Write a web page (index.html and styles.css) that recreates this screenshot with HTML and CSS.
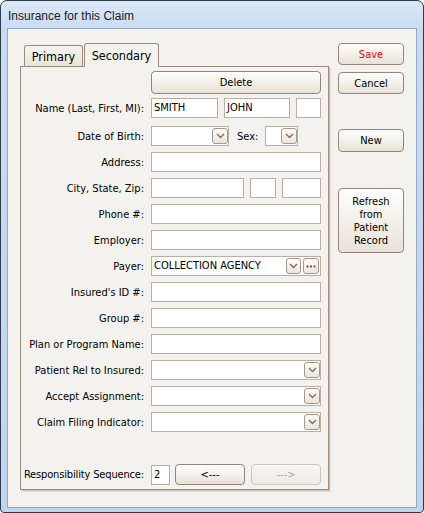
FILE: index.html
```html
<!DOCTYPE html>
<html>
<head>
<meta charset="utf-8">
<link rel="stylesheet" href="styles.css">
</head>
<body>
<div class="window">
  <div class="titlebar">Insurance for this Claim</div>
  <div class="client">
    <div class="main">
      <div class="tabs">
        <div class="tab primary">Primary</div>
        <div class="tab active">Secondary</div>
      </div>
      <div class="panel">
        <div class="row row-delete">
          <div class="lbl"></div>
          <div class="btn delete">Delete</div>
        </div>
        <div class="row row-name">
          <div class="lbl">Name (Last, First, MI):</div>
          <div class="fld">
            <div class="box w-last">SMITH</div>
            <div class="box w-first">JOHN</div>
            <div class="box w-mi"></div>
          </div>
        </div>
        <div class="row row-dob">
          <div class="lbl">Date of Birth:</div>
          <div class="fld">
            <div class="box select w-dob"><span class="val"></span><span class="dd"><svg width="9" height="6" viewBox="0 0 9 6"><path d="M1 1 L4.5 4.5 L8 1" fill="none" stroke="#7c6b5c" stroke-width="1.3"/></svg></span></div>
            <div class="sexlbl">Sex:</div>
            <div class="box select w-sex"><span class="val"></span><span class="dd"><svg width="9" height="6" viewBox="0 0 9 6"><path d="M1 1 L4.5 4.5 L8 1" fill="none" stroke="#7c6b5c" stroke-width="1.3"/></svg></span></div>
          </div>
        </div>
        <div class="row">
          <div class="lbl">Address:</div>
          <div class="fld"><div class="box full"></div></div>
        </div>
        <div class="row">
          <div class="lbl">City, State, Zip:</div>
          <div class="fld">
            <div class="box w-city"></div>
            <div class="box w-state"></div>
            <div class="box w-zip"></div>
          </div>
        </div>
        <div class="row">
          <div class="lbl">Phone #:</div>
          <div class="fld"><div class="box full"></div></div>
        </div>
        <div class="row">
          <div class="lbl">Employer:</div>
          <div class="fld"><div class="box full"></div></div>
        </div>
        <div class="row">
          <div class="lbl">Payer:</div>
          <div class="fld">
            <div class="box select full"><span class="val">COLLECTION AGENCY</span><span class="dd dd-payer"><svg width="9" height="6" viewBox="0 0 9 6"><path d="M1 1 L4.5 4.5 L8 1" fill="none" stroke="#7c6b5c" stroke-width="1.3"/></svg></span><span class="dd dots"><svg width="10" height="3" viewBox="0 0 10 3"><rect x="0.5" y="0.5" width="2" height="2" fill="#6f6052"/><rect x="4" y="0.5" width="2" height="2" fill="#6f6052"/><rect x="7.5" y="0.5" width="2" height="2" fill="#6f6052"/></svg></span></div>
          </div>
        </div>
        <div class="row">
          <div class="lbl">Insured's ID #:</div>
          <div class="fld"><div class="box full"></div></div>
        </div>
        <div class="row">
          <div class="lbl">Group #:</div>
          <div class="fld"><div class="box full"></div></div>
        </div>
        <div class="row">
          <div class="lbl">Plan or Program Name:</div>
          <div class="fld"><div class="box full"></div></div>
        </div>
        <div class="row">
          <div class="lbl">Patient Rel to Insured:</div>
          <div class="fld"><div class="box select full"><span class="val"></span><span class="dd"><svg width="9" height="6" viewBox="0 0 9 6"><path d="M1 1 L4.5 4.5 L8 1" fill="none" stroke="#7c6b5c" stroke-width="1.3"/></svg></span></div></div>
        </div>
        <div class="row">
          <div class="lbl">Accept Assignment:</div>
          <div class="fld"><div class="box select full"><span class="val"></span><span class="dd"><svg width="9" height="6" viewBox="0 0 9 6"><path d="M1 1 L4.5 4.5 L8 1" fill="none" stroke="#7c6b5c" stroke-width="1.3"/></svg></span></div></div>
        </div>
        <div class="row">
          <div class="lbl">Claim Filing Indicator:</div>
          <div class="fld"><div class="box select full"><span class="val"></span><span class="dd"><svg width="9" height="6" viewBox="0 0 9 6"><path d="M1 1 L4.5 4.5 L8 1" fill="none" stroke="#7c6b5c" stroke-width="1.3"/></svg></span></div></div>
        </div>
        <div class="row row-resp">
          <div class="lbl">Responsibility Sequence:</div>
          <div class="fld">
            <div class="box w-seq">2</div>
            <div class="btn prev">&lt;---</div>
            <div class="btn next disabled">---&gt;</div>
          </div>
        </div>
      </div>
    </div>
    <div class="side">
      <div class="btn side-btn save">Save</div>
      <div class="btn side-btn cancel">Cancel</div>
      <div class="btn side-btn new">New</div>
      <div class="btn side-btn refresh">Refresh<br>from<br>Patient<br>Record</div>
    </div>
  </div>
</div>
</body>
</html>
```

FILE: styles.css
```css
html, body {
  margin: 0;
  padding: 0;
  background: #ffffff;
}

.window {
  box-sizing: border-box;
  width: 424px;
  height: 513px;
  border: 1px solid #2e3b4b;
  border-radius: 7px 7px 4px 4px;
  background: linear-gradient(180deg, #dbe8f7 0px, #c9dcf3 27px, #bfd5ef 100%);
  display: flex;
  flex-direction: column;
  padding: 0 6px 4px 6px;
  font-family: "DejaVu Sans Condensed", "Liberation Sans", sans-serif;
  font-size: 11px;
  color: #000;
}

.titlebar {
  height: 27px;
  display: flex;
  align-items: center;
  padding-left: 1px;
  font-family: "Liberation Sans", Arial, sans-serif;
  font-size: 12px;
  color: #1a1a28;
  padding-top: 2px;
  box-sizing: border-box;
}

.client {
  flex: 1;
  border: 1px solid #95a8c0;
  background: #f4f2ee;
  display: flex;
  padding: 14px 0 0 12px;
}

.main {
  width: 309px;
  display: flex;
  flex-direction: column;
}

.tabs {
  height: 23px;
  display: flex;
  align-items: flex-end;
  padding-left: 4px;
  position: relative;
  z-index: 2;
}

.tab {
  box-sizing: border-box;
  border: 1px solid #9d8c7c;
  border-bottom: none;
  border-radius: 3px 3px 0 0;
  display: flex;
  align-items: center;
  justify-content: center;
  font-size: 12.5px;
}

.tab.primary {
  width: 59px;
  height: 21px;
  background: linear-gradient(180deg, #f6f4f0, #e9e4da);
}

.tab.active {
  width: 75px;
  height: 24px;
  margin-left: 1px;
  margin-bottom: -1px;
  background: #f4f2ee;
  padding-bottom: 1px;
}

.panel {
  box-sizing: border-box;
  width: 309px;
  border: 1px solid #9d8c7c;
  box-shadow: 1px 1px 0 #c8c2b9, 2px 2px 0 #e3dfd8;
  padding: 4px 0 4px 0;
  display: flex;
  flex-direction: column;
}

.row {
  display: flex;
  align-items: center;
  height: 20px;
  margin-top: 6px;
}

.row-delete {
  height: 23px;
  margin-top: 0;
}

.row-name {
  margin-top: 4px;
}

.row-dob {
  margin-top: 8px;
}

.row-resp {
  margin-top: 32px;
  height: 21px;
}

.lbl {
  width: 123px;
  text-align: right;
  flex: none;
  white-space: nowrap;
}

.row-resp .lbl {
  letter-spacing: -0.15px;
}

.fld {
  margin-left: 7px;
  width: 170px;
  display: flex;
  align-items: center;
  height: 100%;
}

.box {
  box-sizing: border-box;
  height: 20px;
  border: 1px solid #bcaea0;
  background: #ffffff;
  padding-left: 2px;
  line-height: 18px;
  display: flex;
  align-items: center;
  white-space: nowrap;
  overflow: hidden;
}

.full { width: 170px; }
.w-last { width: 67px; }
.w-first { width: 66px; margin-left: 6px; }
.w-mi { width: 25px; margin-left: 6px; }
.w-dob { width: 78px; }
.w-sex { width: 33px; }
.w-city { width: 93px; }
.w-state { width: 26px; margin-left: 6px; }
.w-zip { width: 39px; margin-left: 6px; }
.w-seq { width: 19px; height: 20px; }

.sexlbl {
  margin-left: 8px;
  margin-right: 7px;
}

.select .val {
  flex: 1;
}

.dd {
  box-sizing: border-box;
  width: 16px;
  height: 16px;
  border: 1px solid #a5978a;
  border-radius: 3px;
  background: linear-gradient(180deg, #fdfcfa, #ebe5db);
  display: flex;
  align-items: center;
  justify-content: center;
  flex: none;
}

.dd-payer {
  width: 15px;
}

.dots {
  margin-left: 2px;
  margin-right: 1px;
}

.btn {
  box-sizing: border-box;
  border: 1px solid #95857a;
  border-radius: 4px;
  background: linear-gradient(180deg, #fefefd 0%, #f5f2ec 45%, #e8e2d7 100%);
  display: flex;
  align-items: center;
  justify-content: center;
  text-align: center;
  font-size: 11px;
  color: #000;
}

.delete {
  margin-left: 7px;
  width: 170px;
  height: 23px;
}

.prev {
  width: 70px;
  height: 21px;
  margin-left: 5px;
}

.next {
  width: 70px;
  height: 21px;
  margin-left: 6px;
}

.btn.disabled {
  border-color: #cfc7bd;
  background: linear-gradient(180deg, #f8f7f4, #efebe5);
  color: #aaa299;
}

.side {
  margin-left: 9px;
  width: 66px;
  display: flex;
  flex-direction: column;
}

.side-btn {
  width: 66px;
  height: 22px;
}

.save {
  color: #ff0000;
}

.cancel {
  margin-top: 7px;
}

.new {
  margin-top: 35px;
  height: 23px;
}

.refresh {
  margin-top: 36px;
  height: 65px;
  line-height: 13px;
}
```
